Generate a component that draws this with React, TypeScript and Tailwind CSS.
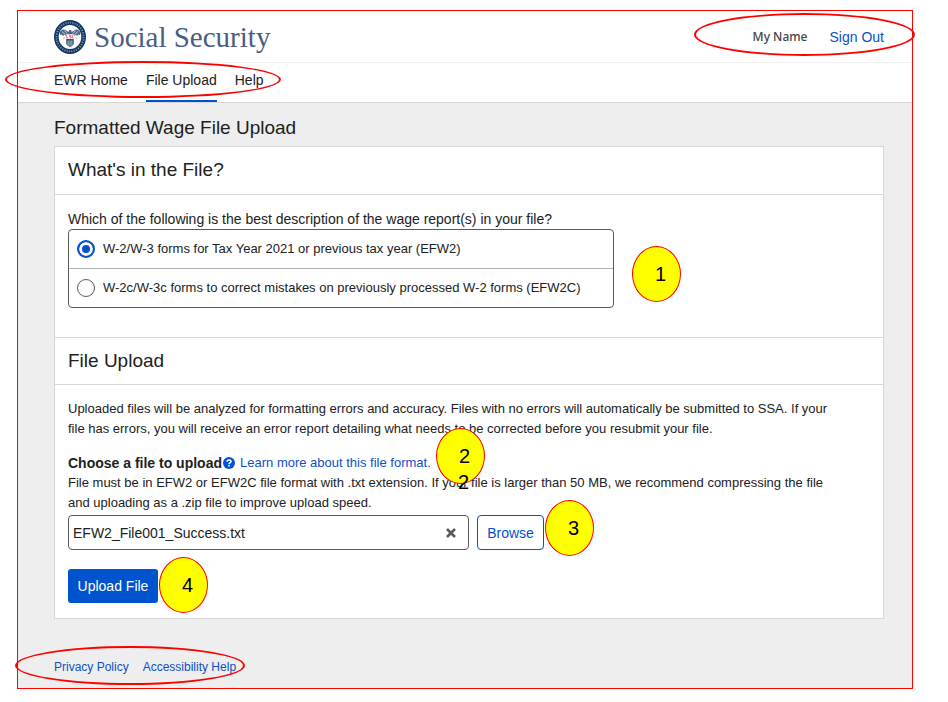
import { useState } from 'react'
import type { ReactNode } from 'react'

const navItems = ['EWR Home', 'File Upload', 'Help']

const fileTypes = [
  { id: 'efw2', label: 'W-2/W-3 forms for Tax Year 2021 or previous tax year (EFW2)' },
  { id: 'efw2c', label: 'W-2c/W-3c forms to correct mistakes on previously processed W-2 forms (EFW2C)' },
]

// red outline drawn over a group of links
function Outline({ className }: { className: string }) {
  return <div className={`absolute pointer-events-none rounded-[50%] border-2 border-[#ff0000] ${className}`}></div>
}

function Callout({ className, children }: { className: string; children: ReactNode }) {
  return (
    <div
      className={`absolute z-10 flex h-14 w-[49px] items-center justify-center rounded-[50%] border border-[#ff0000] bg-[#ffff00] pl-2 text-xl text-black ${className}`}
    >
      {children}
    </div>
  )
}

function Seal() {
  return (
    <svg className="h-[34px] w-8" viewBox="0 0 34 34" preserveAspectRatio="none" aria-hidden="true">
      <circle cx="17" cy="17" r="17" fill="#143764" />
      <circle cx="17" cy="17" r="14.4" fill="none" stroke="#8fa5bd" strokeWidth="1.8" strokeDasharray="1 1.5" />
      <circle cx="17" cy="17" r="12" fill="#fff" />
      <path
        d="M6 13 Q7 9 11 9.5 L15.5 12 L16.2 10 H18.2 L18.8 12 L23 9.5 Q27 9 28 13 L27.4 15 L25.5 14.4 L24.8 16 L22.8 14.8 L21.5 16 L20 14.5 H14 L12.5 16 L11.2 14.8 L9.2 16 L8.5 14.4 L6.6 15Z"
        fill="#4c6688"
      />
      <path d="M8.5 11.5 L12 14.5 M11 10.5 L14 13.5 M25.5 11.5 L22 14.5 M23 10.5 L20 13.5" stroke="#fff" strokeWidth="0.7" />
      <path d="M12.5 14.5 H21.5 V18.5 H12.5Z" fill="#fff" />
      <path d="M13.5 15 V18 H15.3 M18.2 15.3 H16.5 V16.6 H18.2 V18 H16.5 M19.5 15 V18 H21" fill="none" stroke="#e0525c" strokeWidth="0.8" />
      <path d="M13 19 H21 V24 Q20 26 17 27 Q14 26 13 24Z" fill="#31517b" />
      <path d="M15 20.5 V25.5 M17 20.5 V26 M19 20.5 V25.5" stroke="#dbe2ea" strokeWidth="0.8" />
      <path d="M11.2 17 L9.5 19.5 M22.8 17 L24.5 19.5" stroke="#a3b3c5" strokeWidth="0.8" />
    </svg>
  )
}

export default function App() {
  const [fileType, setFileType] = useState('efw2')
  const [fileName, setFileName] = useState('EFW2_File001_Success.txt')

  return (
    <div className="min-h-screen bg-white pt-[10px] pr-[35px] pb-3 pl-[17px] font-['Liberation_Sans',Arial,sans-serif] text-sm leading-5 text-[#212121]">
      <div className="border border-[#ff0000] bg-[#eeeeee]">
        <header className="border-b border-[#d6d7d9] bg-white">
          <div className="flex h-[52px] items-center justify-between border-b border-[#f1f1f1] pr-7 pl-9">
            <div className="flex items-center gap-2">
              <Seal />
              <span className="font-['Liberation_Serif',Georgia,serif] text-[29px] leading-8 text-[#4a5d85]">Social Security</span>
            </div>
            <div className="relative flex items-center gap-[22px]">
              <span className="font-['Noto_Sans',sans-serif] text-xs leading-5 font-medium text-[#444444]">My Name</span>
              <a href="#" className="text-[#0b50c8]">Sign Out</a>
              <Outline className="-top-[14px] -right-[31px] h-[43px] w-[221px]" />
            </div>
          </div>
          <nav className="relative flex h-[39px] gap-[18px] pr-7 pl-9">
            {navItems.map((item) => (
              <a
                key={item}
                href="#"
                className={`flex items-center border-b-2 pb-[3px] ${item === 'File Upload' ? 'border-[#0053cf]' : 'border-transparent'}`}
              >
                {item}
              </a>
            ))}
            <Outline className="-top-0.5 -left-[13px] h-[37px] w-[276px]" />
          </nav>
        </header>

        <main className="pr-7 pl-9">
          <h1 className="pt-[11px] pb-1 text-[19px] leading-7">Formatted Wage File Upload</h1>

          <div className="border border-[#d6d7d9] bg-white">
            <section>
              <h2 className="border-b border-[#d6d7d9] px-[13px] pt-[9px] pb-[10px] text-[19px] leading-7">What's in the File?</h2>
              <div className="px-[13px] pt-[14px] pb-[29px]">
                <fieldset className="relative">
                  <legend>Which of the following is the best description of the wage report(s) in your file?</legend>
                  <div className="w-[546px] max-w-full rounded border border-[#5b5b5b]">
                    {fileTypes.map((type) => (
                      <label
                        key={type.id}
                        className="flex h-[39px] items-center gap-2 border-b border-[#aeb0b5] px-2 text-[13px] last:h-[38px] last:border-b-0"
                      >
                        <input
                          type="radio"
                          name="fileType"
                          checked={fileType === type.id}
                          onChange={() => setFileType(type.id)}
                          className="size-[18px] shrink-0 appearance-none rounded-full border border-[#5b5b5b] bg-white checked:border-2 checked:border-[#0053cf] checked:bg-[#0053cf] checked:shadow-[inset_0_0_0_3px_white]"
                        />
                        {type.label}
                      </label>
                    ))}
                  </div>
                  <Callout className="top-[17px] left-[564px]">1</Callout>
                </fieldset>
              </div>
            </section>

            <section className="border-t border-[#d6d7d9]">
              <h2 className="border-b border-[#d6d7d9] px-[13px] py-[9px] text-[19px] leading-7">File Upload</h2>
              <div className="px-[13px] pt-[14px] pb-[15px]">
                <p className="pr-8 text-[13px] leading-5">
                  Uploaded files will be analyzed for formatting errors and accuracy. Files with no errors will automatically be submitted to
                  SSA. If your file has errors, you will receive an error report detailing what needs to be corrected before you resubmit your
                  file.
                </p>
                <div className="relative mt-[14px] flex items-center">
                  <label htmlFor="wage-file" className="font-bold">Choose a file to upload</label>
                  <svg className="mr-[5px] ml-px size-3" viewBox="0 0 12 12" aria-hidden="true">
                    <circle cx="6" cy="6" r="6" fill="#0053cf" />
                    <path d="M4 4.7 Q4.1 2.9 6 2.9 Q8 2.9 8 4.5 Q8 5.5 6.8 6 Q6 6.4 6 7.2" fill="none" stroke="#fff" strokeWidth="1.5" />
                    <rect x="5.2" y="8.1" width="1.6" height="1.5" fill="#fff" />
                  </svg>
                  <a href="#" className="text-[13px] text-[#0b50c8]">Learn more about this file format.</a>
                  <Callout className="-top-[25px] left-[368px]">2</Callout>
                  <span className="absolute top-[19px] left-[390px] z-10 text-xl leading-5 text-black">2</span>
                </div>
                <p className="pr-8 text-[13px] leading-5">
                  File must be in EFW2 or EFW2C file format with .txt extension. If your file is larger than 50 MB, we recommend compressing
                  the file and uploading as a .zip file to improve upload speed.
                </p>
                <div className="mt-0.5 flex gap-2">
                  <div className="flex h-[35px] w-[401px] items-center rounded border border-[#5b5b5b] pr-3 pl-1">
                    <input
                      id="wage-file"
                      type="text"
                      readOnly
                      value={fileName}
                      className="min-w-0 flex-1 bg-transparent outline-none"
                    />
                    <button type="button" aria-label="Clear file" onClick={() => setFileName('')}>
                      <svg className="size-[10px]" viewBox="0 0 10 10" aria-hidden="true">
                        <path d="M1 1 L9 9 M9 1 L1 9" stroke="#5b5b5b" strokeWidth="2.6" />
                      </svg>
                    </button>
                  </div>
                  <div className="relative">
                    <button type="button" className="h-[35px] w-[67px] rounded border border-[#0053cf] text-[#0053cf]">Browse</button>
                    <Callout className="-top-[15px] left-[68px]">3</Callout>
                  </div>
                </div>
                <div className="relative mt-[19px]">
                  <button type="button" className="h-[34px] w-[90px] rounded-[3px] bg-[#0053cf] text-white">Upload File</button>
                  <Callout className="-top-3 left-[91px]">4</Callout>
                </div>
              </div>
            </section>
          </div>
        </main>

        <footer className="relative flex gap-[14px] pt-10 pr-7 pb-[13px] pl-9 text-xs leading-4 text-[#0b50c8]">
          <a href="#">Privacy Policy</a>
          <a href="#">Accessibility Help</a>
          <Outline className="top-[27px] -left-[3px] h-[39px] w-[230px]" />
        </footer>
      </div>
    </div>
  )
}
